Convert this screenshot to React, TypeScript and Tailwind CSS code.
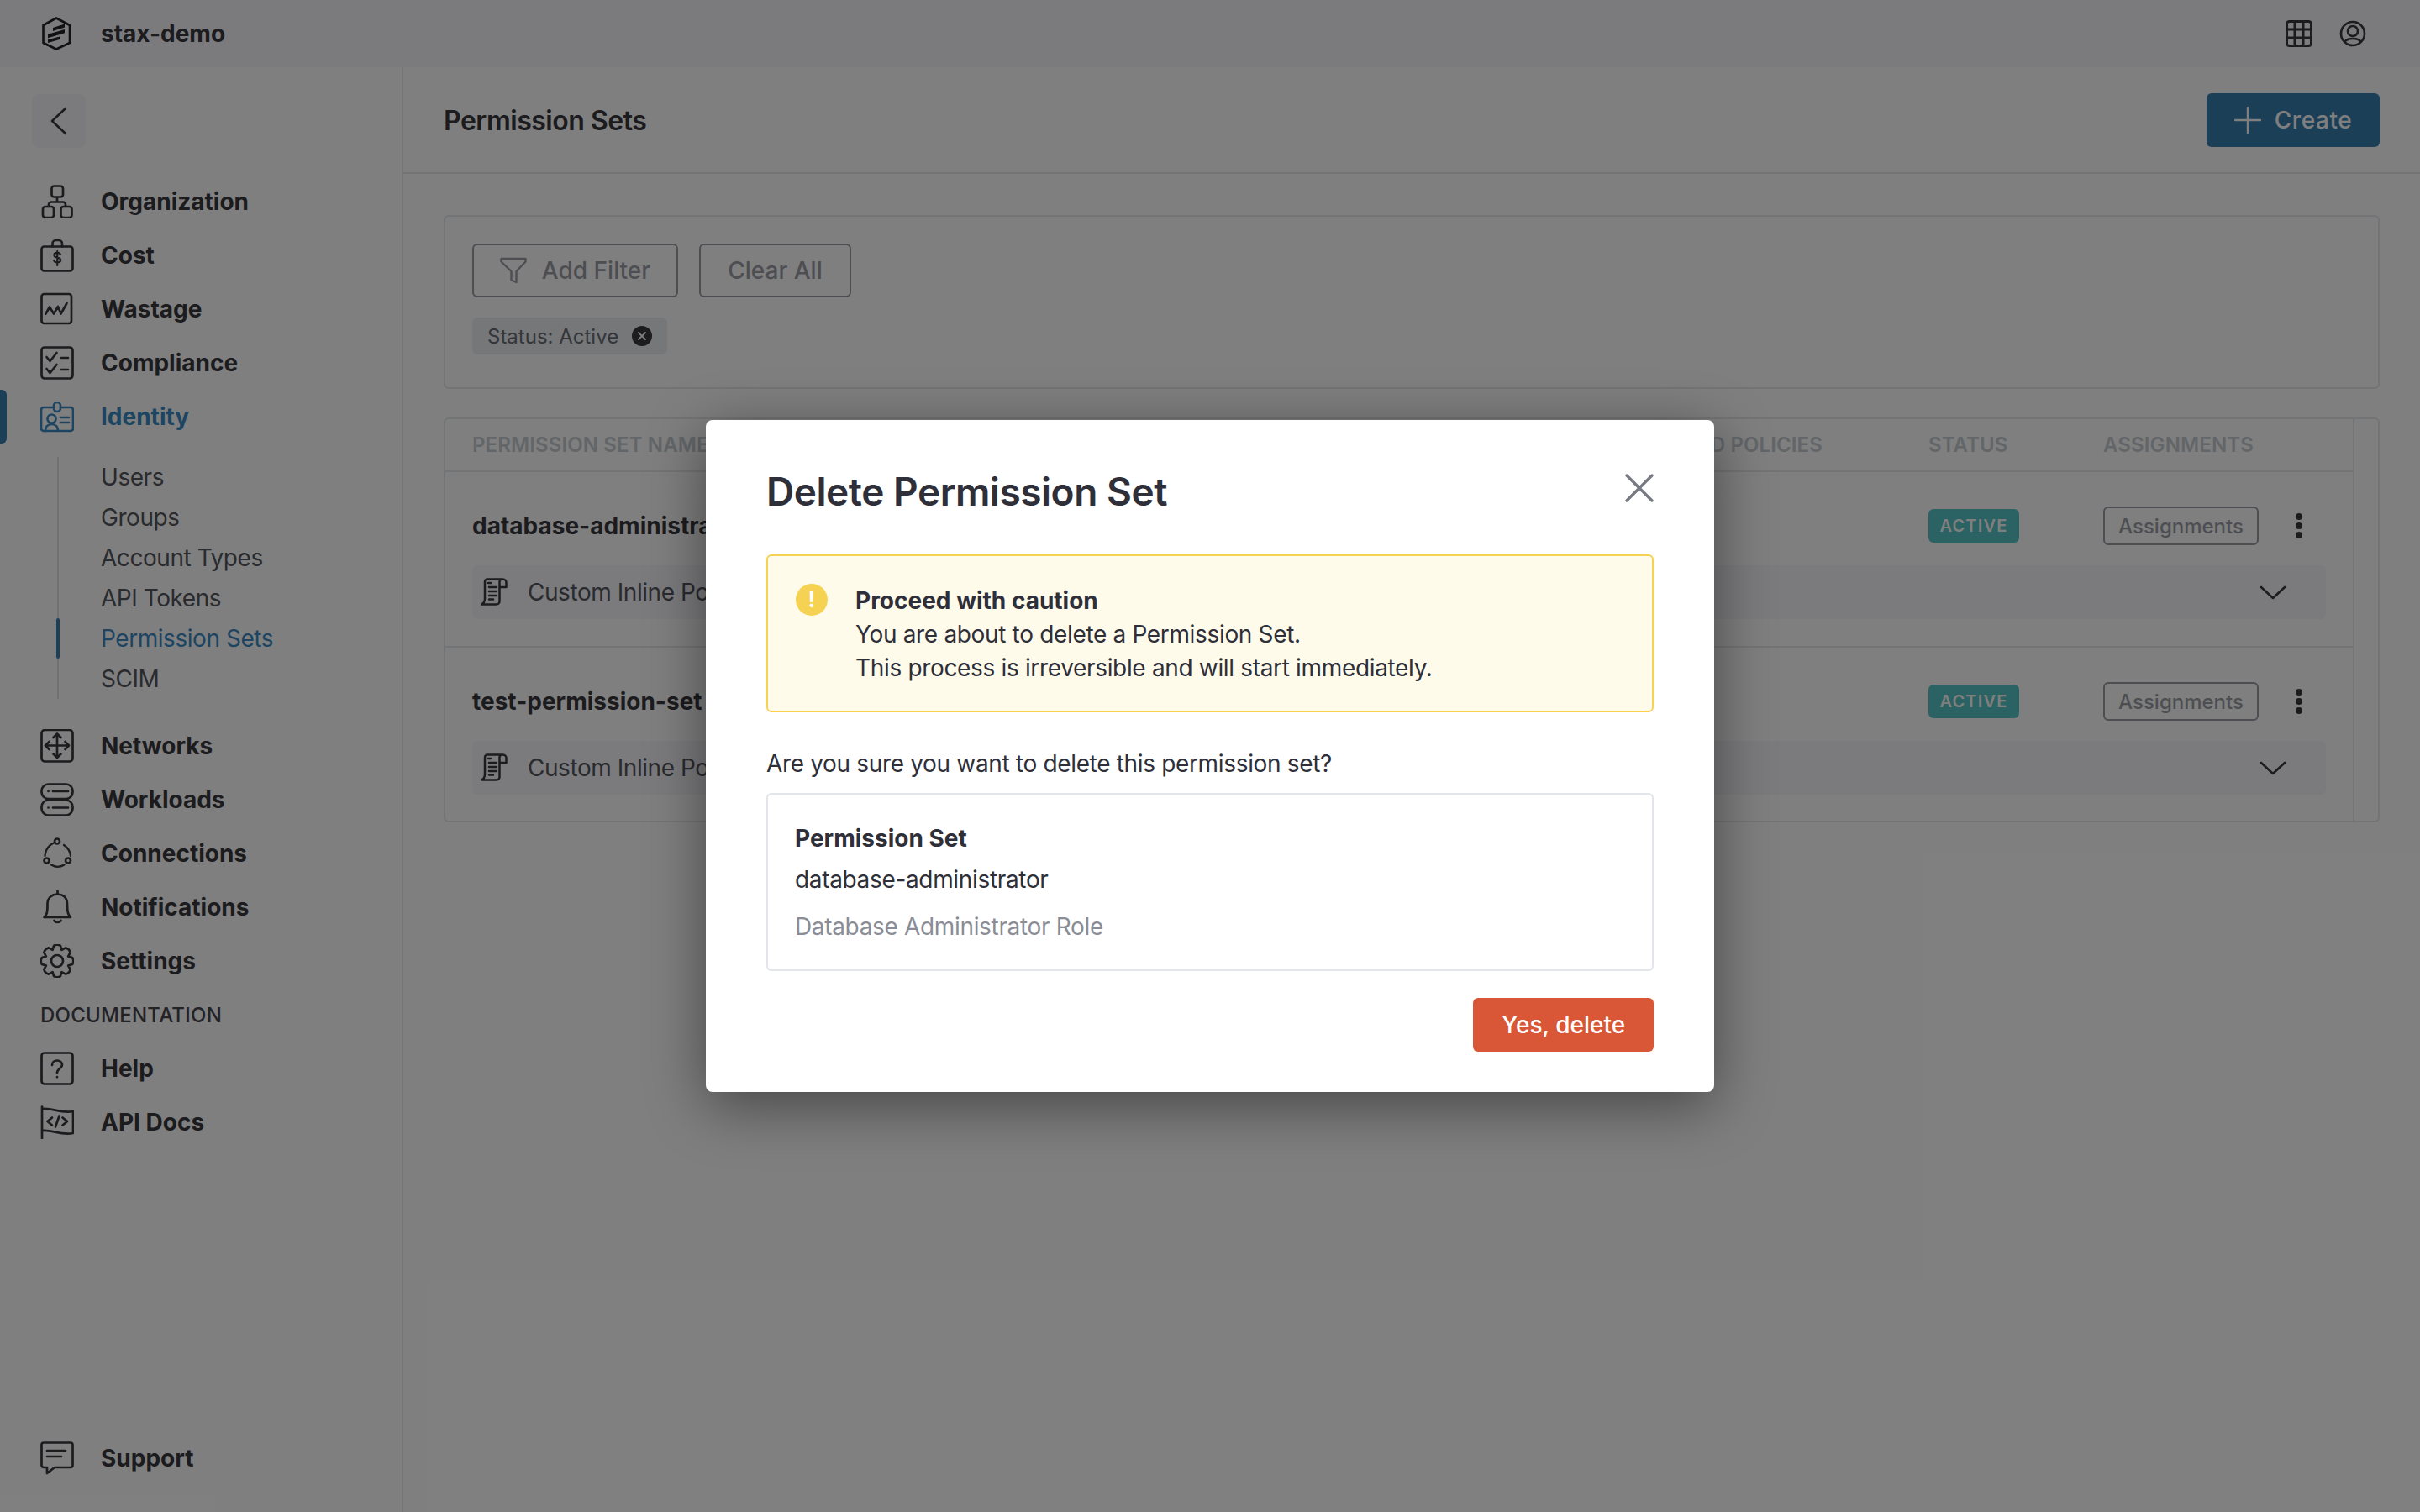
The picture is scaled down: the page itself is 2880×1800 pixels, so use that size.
import type { ReactNode } from "react"

function Ico({ children, className = "text-[#38383e]", size = 40 }: { children: ReactNode; className?: string; size?: number }) {
    return (
        <svg width={size} height={size} viewBox={`0 0 ${size} ${size}`} fill="none" stroke="currentColor" strokeWidth="2.700" strokeLinecap="round" strokeLinejoin="round" className={`shrink-0 ${className}`}>
            {children}
        </svg>
    )
}

function gearPath() {
    const cx = 20, cy = 20, teeth = 8
    let d = ""
    for (let i = 0; i < teeth; i++) {
        const a = (i / teeth) * Math.PI * 2 - Math.PI / 2
        const step = Math.PI * 2 / teeth
        const pts = [
            [a - step * 0.27, 18.6],
            [a + step * 0.27, 18.6],
            [a + step * 0.5, 14.2],
        ]
        pts.forEach(([ang, r], j) => {
            const x = (cx + Math.cos(ang) * r).toFixed(2)
            const y = (cy + Math.sin(ang) * r).toFixed(2)
            if (i === 0 && j === 0) d += `M${x} ${y}`
            else if (j === 1) d += `Q${(cx + Math.cos(a) * 20.5).toFixed(2)} ${(cy + Math.sin(a) * 20.5).toFixed(2)} ${x} ${y}`
            else d += `L${x} ${y}`
        })
    }
    return d + "Z"
}

const icons: Record<string, ReactNode> = {
    Organization: (
        <>
            <rect x="13.5" y="1.5" width="13.5" height="13" rx="3" />
            <rect x="3" y="26" width="13" height="13" rx="3" />
            <rect x="24.5" y="26" width="13" height="13" rx="3" />
            <path d="M20 15v5.5M10 26v-2.5a3 3 0 0 1 3-3h14a3 3 0 0 1 3 3V26" />
        </>
    ),
    Cost: (
        <>
            <rect x="1.500" y="9.500" width="37" height="29" rx="3" />
            <path d="M14.500 9.500V6a4 4 0 0 1 4-4h3.500a4 4 0 0 1 4 4v3.500" />
            <path d="M24 19c-.6-1.600-2-2.200-3.800-2.200-2.200 0-3.800 1-3.800 2.900 0 4 7.800 1.800 7.800 5.800 0 2-1.700 3-4 3-2 0-3.500-.8-4-2.500M20.200 15v17" strokeWidth="2.200" />
        </>
    ),
    Wastage: (
        <>
            <rect x="1.500" y="2" width="35.500" height="35" rx="3" />
            <path d="M6.500 25.500 11 17.500l5 8 5-8.500 3.500 8.500 7-12.500" />
        </>
    ),
    Compliance: (
        <>
            <rect x="1.500" y="1.500" width="37" height="37" rx="3.500" />
            <path d="m7.500 13 4 5 8-10M7.500 27l4 5 8-10M25 14h8M25 28h8" />
        </>
    ),
    Identity: (
        <>
            <path d="M16 9H4a3 3 0 0 0-3 3v22a3 3 0 0 0 3 3h32a3 3 0 0 0 3-3V12a3 3 0 0 0-3-3H24" />
            <rect x="16" y="3" width="8" height="11" rx="4" />
            <circle cx="13.500" cy="22.500" r="5" />
            <path d="M6 37c0-5 3-8 7.500-8s7.500 3 7.500 8M24 21h10M24 27h10" />
        </>
    ),
    Networks: (
        <>
            <rect x="1.500" y="1" width="37" height="37.500" rx="4" />
            <path d="M20 6v27M6 19.500h28M15.500 10 20 5.500l4.500 4.500M15.500 29.500l4.500 4.500 4.500-4.500M10.500 15l-4.500 4.500 4.500 4.500M29.500 15l4.500 4.500-4.500 4.500" />
        </>
    ),
    Workloads: (
        <>
            <rect x="1.500" y="1.500" width="37" height="17.500" rx="8" />
            <rect x="1.500" y="20.500" width="37" height="18" rx="8" />
            <path d="M15 10h18M15 29.500h18M9.500 10h.01M9.500 29.500h.01" />
        </>
    ),
    Connections: (
        <>
            <circle cx="20" cy="5.500" r="3" />
            <circle cx="7.500" cy="28.500" r="3" />
            <circle cx="33" cy="28.500" r="3" />
            <path d="M17 7C11 9.500 6 15 5.500 23M28 10C32.500 13 35.500 17 36 23M13 33.500c5 3 10.500 3 15.500 0" strokeWidth="2.300" />
        </>
    ),
    Notifications: (
        <>
            <path d="M4.500 32c3.500-3 4-6 4-16 0-7 5-11.500 12-11.500S32 9 32 16c0 10 1 13 4 16ZM20.500 4.500V1M16.500 36c1.500 2.500 6.500 2.500 8 0" />
        </>
    ),
    Settings: (
        <>
            <path d={gearPath()} />
            <circle cx="20" cy="20" r="7" />
        </>
    ),
    Help: (
        <>
            <rect x="1.500" y="1.500" width="37" height="37" rx="3.500" />
            <path d="M14 16c0-3.500 2.700-5.500 6-5.500s6 2.200 6 5c0 4.500-6 4.500-6 9.500M20 30.200h.01" />
        </>
    ),
    "API Docs": (
        <>
            <path d="M2 39V1.500M2 4c12-1.500 22 6 37 3v26c-15 3-25-4.500-37-3" />
            <path d="M14 14.500 8.500 19l5.500 4.500M26.500 14.500 32 19l-5.500 4.500M22.500 12.500 18 25.500" />
        </>
    ),
    Support: (
        <>
            <path d="M4 1.500h32a2.500 2.500 0 0 1 2.500 2.500v24.500a2.500 2.500 0 0 1-2.500 2.500H17l-9 7v-7H4a2.500 2.500 0 0 1-2.500-2.500V4A2.500 2.500 0 0 1 4 1.500Z" />
            <path d="M8 11h22M8 18h17" />
        </>
    ),
}

function NavItem({ label, active }: { label: string; active?: boolean }) {
    return (
        <div className="relative flex h-[64px] items-center pl-[48px]">
            {active && <span className="absolute left-0 top-0 h-[64px] w-[8px] rounded-r-[6px] bg-[#387eb0]" />}
            <Ico className={active ? "text-[#3a8ac4]" : "text-[#38383e]"}>{icons[label]}</Ico>
            <span className={`ml-[32px] text-[28px] font-bold ${active ? "text-[#3a8ac4]" : "text-[#38383e]"}`}>{label}</span>
        </div>
    )
}

function PolicyIcon() {
    return (
        <svg width="32" height="34" viewBox="0 0 32 34" fill="none" stroke="#38383e" strokeWidth="2.500" strokeLinecap="round" strokeLinejoin="round" className="shrink-0">
            <path d="M26 1.500H8a3 3 0 0 0-3 3V25c0 3-1 5-4 6.500h18a3.500 3.500 0 0 0 3.500-3.500V4.500a3 3 0 0 1 3-3h1a4 4 0 0 1 4 4V11h-8" />
            <path d="M9 6h3M10 11h9M10 16h9M10 21h9M10 25.500h5" />
        </svg>
    )
}

function PolicyRow({ name, last }: { name: string; last?: boolean }) {
    return (
        <div className={`px-[32px] pt-[40px] ${last ? "h-[206px]" : "h-[209px] border-b-2 border-[#e6e8ed]"}`}>
            <div className="flex h-[48px] items-center">
                <div className="flex-1 text-[28px] font-bold text-[#38383e]">{name}</div>
                <div className="w-[208px]">
                    <span className="inline-flex h-[40px] w-[108px] items-center justify-center rounded-[6px] bg-[#56c4c6] text-[20px] font-semibold tracking-[0.06em] text-white">ACTIVE</span>
                </div>
                <div className="flex h-[46px] w-[185px] items-center justify-center rounded-[6px] border-2 border-[#9a9ca5] pt-[2px] text-[24px] font-medium text-[#9a9ca5]">Assignments</div>
                <div className="ml-[38px] flex w-[20px] flex-col items-center gap-[3px]">
                    <span className="h-[8px] w-[8px] rounded-full bg-[#38383e]" />
                    <span className="h-[8px] w-[8px] rounded-full bg-[#38383e]" />
                    <span className="h-[8px] w-[8px] rounded-full bg-[#38383e]" />
                </div>
                <div className="w-[22px]" />
            </div>
            <div className="mt-[23px] flex h-[64px] items-center rounded-[6px] bg-[#f6f7fa] pl-[10px] pr-[47px]">
                <PolicyIcon />
                <span className="ml-[24px] flex-1 text-[28px] tracking-[-0.016em] text-[#54565c]">Custom Inline Policy</span>
                <svg width="32" height="18" viewBox="0 0 32 18" fill="none" stroke="#38383e" strokeWidth="2.600" strokeLinecap="round" strokeLinejoin="round" className="mt-[2px]">
                    <path d="m2 2 14 13L30 2" />
                </svg>
            </div>
        </div>
    )
}

function Sidebar() {
    const subs = ["Users", "Groups", "Account Types", "API Tokens", "Permission Sets", "SCIM"]
    return (
        <aside className="flex w-[480px] shrink-0 flex-col border-r-2 border-[#e6e8ed] pb-[32px] pt-[32px]">
            <div className="ml-[38px] flex h-[64px] w-[64px] items-center justify-center rounded-[8px] bg-[#f6f7fa]">
                <svg width="20" height="34" viewBox="0 0 20 34" fill="none" stroke="#38383e" strokeWidth="2.600" strokeLinecap="round" strokeLinejoin="round">
                    <path d="M18 2 2 17l16 15" />
                </svg>
            </div>
            <nav className="mt-[32px]">
                {["Organization", "Cost", "Wastage", "Compliance"].map(l => <NavItem key={l} label={l} />)}
                <NavItem label="Identity" active />
            </nav>
            <div className="ml-[68px] mt-[16px] border-l-2 border-[#e0e2e8]">
                {subs.map(s => (
                    <div key={s} className={`relative flex h-[48px] items-center pl-[50px] text-[28px] tracking-[-0.016em] ${s === "Permission Sets" ? "text-[#3a8ac4]" : "text-[#54565c]"}`}>
                        {s === "Permission Sets" && <span className="absolute -left-[3px] top-0 h-[48px] w-[4px] rounded-full bg-[#387eb0]" />}
                        {s}
                    </div>
                ))}
            </div>
            <div className="mt-[24px]">
                {["Networks", "Workloads", "Connections", "Notifications", "Settings"].map(l => <NavItem key={l} label={l} />)}
                <div className="flex h-[64px] items-center pl-[48px] pt-[2px] text-[24px] font-medium tracking-[0.01em] text-[#46474e]">DOCUMENTATION</div>
                <NavItem label="Help" />
                <NavItem label="API Docs" />
            </div>
            <div className="mt-auto">
                <NavItem label="Support" />
            </div>
        </aside>
    )
}

function Modal() {
    return (
        <div className="h-[800px] w-[1200px] rounded-[8px] bg-white px-[72px] shadow-[0_16px_70px_rgba(0,0,0,0.45)]">
            <div className="flex h-[160px] items-start justify-between pt-[56px]">
                <h2 className="text-[46px] font-semibold leading-[58px] tracking-[-0.01em] text-[#2e2f38]">Delete Permission Set</h2>
                <svg width="34" height="34" viewBox="0 0 34 34" fill="none" stroke="#777a82" strokeWidth="3.400" strokeLinecap="round" className="mt-[8px]">
                    <path d="M2 2l30 30M32 2 2 32" />
                </svg>
            </div>
            <div className="flex h-[188px] rounded-[6px] border-2 border-[#f6d252] bg-[#fefbeb] pl-[33px] pt-[33px]">
                <span className="flex h-[38px] w-[38px] shrink-0 items-center justify-center rounded-full bg-[#f6d252] text-[26px] font-bold leading-none text-white">!</span>
                <div className="ml-[33px] text-[28px] leading-[40px] tracking-[-0.012em] text-[#2e2f38]">
                    <div className="font-bold tracking-normal">Proceed with caution</div>
                    <div>You are about to delete a Permission Set.</div>
                    <div>This process is irreversible and will start immediately.</div>
                </div>
            </div>
            <p className="mt-[41px] text-[28px] leading-[40px] tracking-[-0.012em] text-[#2e2f38]">Are you sure you want to delete this permission set?</p>
            <div className="mt-[15px] h-[212px] rounded-[6px] border-2 border-[#e2e5ea] px-[32px] pt-[32px] text-[28px] leading-[40px]">
                <div className="font-bold text-[#2e2f38]">Permission Set</div>
                <div className="mt-[9px] tracking-[-0.012em] text-[#2e2f38]">database-administrator</div>
                <div className="mt-[16px] tracking-[-0.012em] text-[#8a8d96]">Database Administrator Role</div>
            </div>
            <div className="mt-[32px] flex justify-end">
                <button className="h-[64px] w-[215px] rounded-[6px] bg-[#d95736] text-[28px] font-medium text-white">Yes, delete</button>
            </div>
        </div>
    )
}

export default function App() {
    return (
        <div className="relative flex h-[1800px] w-[2880px] flex-col overflow-hidden bg-white [font-family:Inter,sans-serif]">
            <header className="flex h-[80px] shrink-0 items-center bg-[#f6f7fa] pl-[50px] pr-[64px]">
                <svg width="36" height="40" viewBox="0 0 36 40" fill="none" stroke="#222226" strokeWidth="2.600" strokeLinejoin="round" className="shrink-0">
                    <path d="M17 1.500 33 10v21L17 38.500 1.500 31V10Z" />
                    <path d="m13 13 14-4.500v4L13 17Zm-6 7.800L27 15v4.300L7 25.300Zm0 6.500L21 23.500V27L7 31Z" fill="#222226" stroke="none" />
                </svg>
                <span className="ml-[34px] flex-1 text-[28px] font-bold text-[#38383e]">stax-demo</span>
                <svg width="32" height="32" viewBox="0 0 32 32" fill="none" stroke="#38383e" strokeWidth="3" strokeLinejoin="round">
                    <rect x="1.500" y="1.500" width="29" height="29" rx="3" />
                    <path d="M11 1.500v29M21 1.500v29M1.500 11h29M1.500 21h29" />
                </svg>
                <svg width="32" height="32" viewBox="0 0 32 32" fill="none" stroke="#38383e" strokeWidth="2.600" className="ml-[32px]">
                    <circle cx="16" cy="16" r="14" />
                    <circle cx="16" cy="13" r="6" />
                    <path d="M6 26.500c1.500-3.500 5.500-4.500 10-4.500s8.500 1 10 4.500" />
                </svg>
            </header>
            <div className="flex min-h-0 flex-1">
                <Sidebar />
                <main className="flex min-w-0 flex-1 flex-col">
                    <div className="flex h-[127px] shrink-0 items-center justify-between border-b-2 border-[#e6e8ed] px-[48px]">
                        <h1 className="mt-[2px] text-[32px] font-semibold tracking-[-0.015em] text-[#38383e]">Permission Sets</h1>
                        <button className="flex h-[64px] w-[206px] items-center justify-center rounded-[6px] bg-[#387eb0] text-[28px] font-medium tracking-[0.02em] text-white">
                            <svg width="32" height="32" viewBox="0 0 32 32" fill="none" stroke="white" strokeWidth="2.400" strokeLinecap="round" className="mr-[16px]">
                                <path d="M16 1v30M1 16h30" />
                            </svg>
                            Create
                        </button>
                    </div>
                    <div className="flex-1 px-[48px] pt-[49px]">
                        <section className="h-[207px] rounded-[6px] border-2 border-[#e6e8ed] pl-[32px] pt-[32px]">
                            <div className="flex gap-[25px]">
                                <button className="flex h-[64px] w-[245px] items-center justify-center rounded-[6px] border-2 border-[#9a9ca5] text-[28px] font-medium text-[#9a9ca5]">
                                    <svg width="32" height="32" viewBox="0 0 32 32" fill="none" stroke="#9a9ca5" strokeWidth="2.400" strokeLinejoin="round" className="mr-[18px]">
                                        <path d="M1.500 2h29v3.500L19.500 17v13l-6-2.500V17L1.500 5.500Z" />
                                    </svg>
                                    Add Filter
                                </button>
                                <button className="h-[64px] w-[181px] rounded-[6px] border-2 border-[#9a9ca5] text-[28px] font-medium text-[#9a9ca5]">Clear All</button>
                            </div>
                            <div className="mt-[24px] flex h-[44px] w-[232px] items-center justify-between rounded-[6px] bg-[#eceef2] pl-[18px] pr-[18px] text-[24px] text-[#6a6c74]">
                                <span className="mt-[2px]">Status: Active</span>
                                <span className="flex h-[24px] w-[24px] items-center justify-center rounded-full bg-[#38383e]">
                                    <svg width="12" height="12" viewBox="0 0 12 12" stroke="white" strokeWidth="1.800" strokeLinecap="round"><path d="m2 2 8 8M10 2l-8 8" /></svg>
                                </span>
                            </div>
                        </section>
                        <section className="mt-[34px] flex h-[482px] rounded-[6px] border-2 border-[#e6e8ed]">
                            <div className="min-w-0 flex-1 border-r-2 border-[#e6e8ed]">
                                <div className="flex h-[63px] items-center border-b-2 border-[#e6e8ed] px-[32px] text-[24px] font-semibold tracking-[0.005em] text-[#c6ccd2]">
                                    <div className="flex-1">PERMISSION SET NAME</div>
                                    <div className="mr-[126px] w-[300px] text-right">ATTACHED POLICIES</div>
                                    <div className="w-[208px]">STATUS</div>
                                    <div className="w-[265px]">ASSIGNMENTS</div>
                                </div>
                                <PolicyRow name="database-administrator" />
                                <PolicyRow name="test-permission-set" last />
                            </div>
                            <div className="w-[28px]" />
                        </section>
                    </div>
                </main>
            </div>
            <div className="absolute inset-0 flex items-center justify-center bg-black/50">
                <Modal />
            </div>
        </div>
    )
}
